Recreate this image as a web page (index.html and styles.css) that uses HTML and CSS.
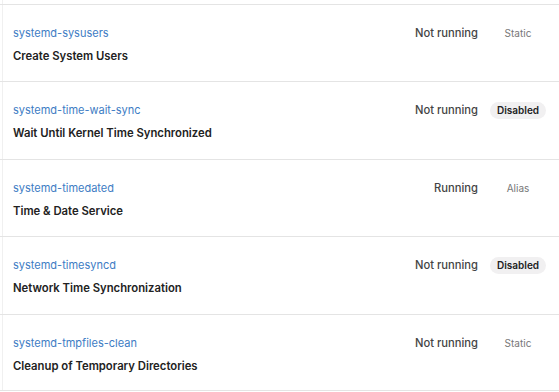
FILE: index.html
```html
<!DOCTYPE html>
<html lang="en">
<head>
    <meta charset="UTF-8">
    <title>Services</title>
    <link rel="stylesheet" href="styles.css">
</head>
<body>
    <div id="service-list">
        <div class="service-row">
            <div class="service-info">
                <a class="service-name" href="#">systemd-sysusers</a>
                <div class="service-desc">Create System Users</div>
            </div>
            <div class="service-status">Not running</div>
            <div class="service-state"><span class="state-text">Static</span></div>
        </div>
        <div class="service-row">
            <div class="service-info">
                <a class="service-name" href="#">systemd-time-wait-sync</a>
                <div class="service-desc">Wait Until Kernel Time Synchronized</div>
            </div>
            <div class="service-status">Not running</div>
            <div class="service-state"><span class="state-badge">Disabled</span></div>
        </div>
        <div class="service-row">
            <div class="service-info">
                <a class="service-name" href="#">systemd-timedated</a>
                <div class="service-desc">Time &amp; Date Service</div>
            </div>
            <div class="service-status">Running</div>
            <div class="service-state"><span class="state-text">Alias</span></div>
        </div>
        <div class="service-row">
            <div class="service-info">
                <a class="service-name" href="#">systemd-timesyncd</a>
                <div class="service-desc">Network Time Synchronization</div>
            </div>
            <div class="service-status">Not running</div>
            <div class="service-state"><span class="state-badge">Disabled</span></div>
        </div>
        <div class="service-row">
            <div class="service-info">
                <a class="service-name" href="#">systemd-tmpfiles-clean</a>
                <div class="service-desc">Cleanup of Temporary Directories</div>
            </div>
            <div class="service-status">Not running</div>
            <div class="service-state"><span class="state-text">Static</span></div>
        </div>
    </div>
</body>
</html>
```

FILE: styles.css
```css
body {
    margin: 0;
    padding: 0;
    background-color: #fff;
    font-family: Inter, "Noto Sans", sans-serif;
    color: #222;
}

#service-list {
    padding-top: 4px;
    margin-left: 2px;
    border-left: 1px solid #f0f0f0;
}

.service-row {
    display: flex;
    align-items: flex-start;
    box-sizing: border-box;
    height: 77.4px;
    padding-top: 20px;
    border-top: 1px solid #e4e4e4;
    margin-left: -3px;
    padding-left: 3px;
}

.service-row:last-child {
    border-bottom: 1px solid #e4e4e4;
}

.service-info {
    flex: 1;
    padding-left: 10px;
}

.service-name {
    display: block;
    font-size: 11px;
    line-height: 16px;
    color: #3d7cc4;
    text-decoration: none;
}

.service-desc {
    margin-top: 7px;
    font-size: 11.3px;
    line-height: 16px;
    font-weight: 600;
    color: #222;
}

.service-status {
    font-size: 11.2px;
    line-height: 16px;
    font-weight: 500;
    color: #444;
    text-align: right;
}

.service-state {
    width: 60px;
    margin-left: 10px;
    margin-right: 11px;
    text-align: center;
    font-size: 10px;
    line-height: 16px;
}

.state-text {
    color: #777;
}

.state-badge {
    display: inline-block;
    padding: 0 7px;
    border-radius: 9px;
    background-color: #f1f0f1;
    color: #222;
    font-weight: 600;
    line-height: 17px;
}
```
